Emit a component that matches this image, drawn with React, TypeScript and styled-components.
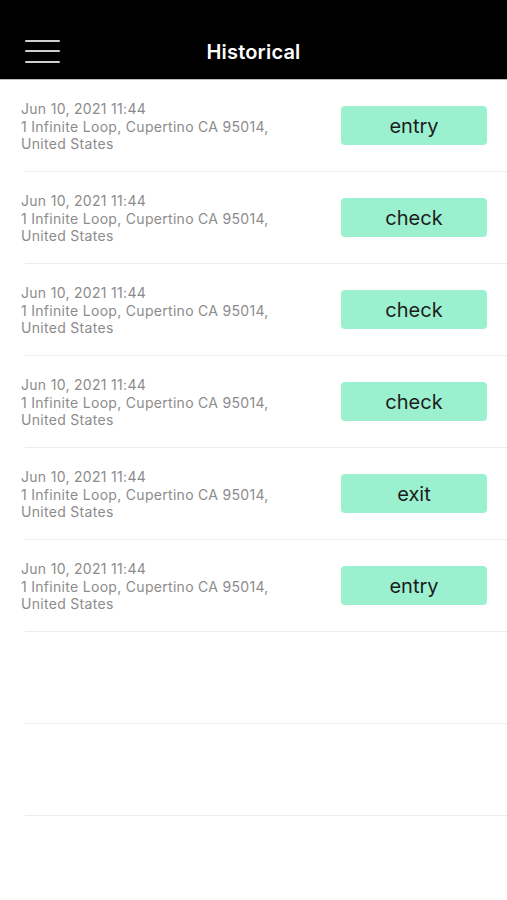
import styled, { createGlobalStyle } from "styled-components";

const GlobalStyle = createGlobalStyle`
  html, body {
    margin: 0;
    padding: 0;
    background: #ffffff;
  }
  body {
    font-family: Inter, "Liberation Sans", Arial, sans-serif;
  }
`;

const Screen = styled.div`
  width: 507px;
  min-height: 900px;
  background: #ffffff;
`;

const Header = styled.header`
  height: 80px;
  background: #000000;
  border-bottom: 1px solid #bdbdbd;
  display: grid;
  grid-template-columns: 60px 1fr 60px;
  align-items: center;
  padding: 22px 0 0 25px;
  box-sizing: border-box;
  width: 100%;
`;

const Burger = styled.div`
  width: 35px;
  display: flex;
  flex-direction: column;
  gap: 8.5px;
  margin-top: 1px;

  span {
    display: block;
    height: 2px;
    background: #cfcfcf;
    border-radius: 1px;
  }
`;

const Title = styled.h1`
  margin: 3px 0 0 -25px;
  text-align: center;
  color: #ffffff;
  font-size: 20px;
  font-weight: 600;
  letter-spacing: 0.2px;
`;

const List = styled.ul`
  list-style: none;
  margin: 0;
  padding: 0;
`;

const Row = styled.li`
  height: 92px;
  display: flex;
  align-items: center;
  justify-content: space-between;
  padding: 0 20px 0 21px;
  box-sizing: border-box;
  position: relative;

  &::after {
    content: "";
    position: absolute;
    left: 25px;
    right: 0;
    bottom: 0;
    height: 1px;
    background: #ececec;
  }
`;

const Info = styled.div`
  display: flex;
  flex-direction: column;
  color: #8c8c8c;
  font-size: 14px;
  line-height: 17.5px;
  letter-spacing: 0.3px;
  margin-top: 1px;
`;

const Tag = styled.button`
  width: 146px;
  height: 39px;
  border: none;
  border-radius: 4px;
  background: #9bf0d0;
  color: #1c1c1c;
  font-family: inherit;
  font-size: 20px;
  padding: 0;
  margin-bottom: 1px;
`;

type Entry = { date: string; address: string[]; kind: string };

const address = ["1 Infinite Loop, Cupertino CA 95014,", "United States"];

const entries: Entry[] = [
  { date: "Jun 10, 2021 11:44", address, kind: "entry" },
  { date: "Jun 10, 2021 11:44", address, kind: "check" },
  { date: "Jun 10, 2021 11:44", address, kind: "check" },
  { date: "Jun 10, 2021 11:44", address, kind: "check" },
  { date: "Jun 10, 2021 11:44", address, kind: "exit" },
  { date: "Jun 10, 2021 11:44", address, kind: "entry" },
];

const App = () => {
  return (
    <Screen>
      <GlobalStyle />
      <Header>
        <Burger>
          <span />
          <span />
          <span />
        </Burger>
        <Title>Historical</Title>
        <div />
      </Header>
      <List>
        {entries.map((e, i) => (
          <Row key={i}>
            <Info>
              <span>{e.date}</span>
              {e.address.map((line) => (
                <span key={line}>{line}</span>
              ))}
            </Info>
            <Tag>{e.kind}</Tag>
          </Row>
        ))}
        <Row />
        <Row />
      </List>
    </Screen>
  );
};

export default App;
